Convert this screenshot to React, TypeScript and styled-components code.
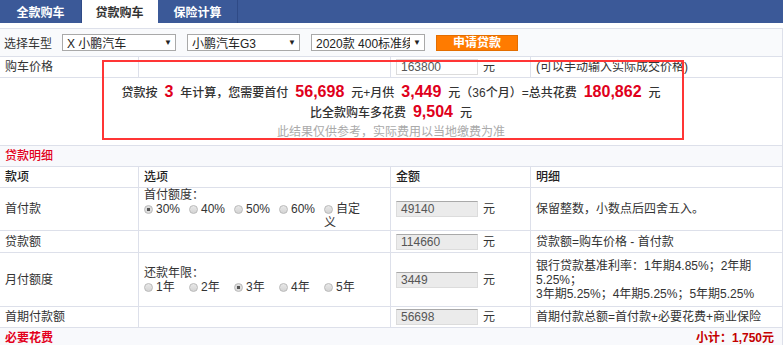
import React from 'react';
import styled, { createGlobalStyle } from 'styled-components';

const GlobalStyle = createGlobalStyle`
  * { box-sizing: border-box; }
  body {
    margin: 0;
    background: #fff;
    font-family: "Liberation Sans", "Noto Sans CJK SC", sans-serif;
    font-size: 12px;
    color: #333;
  }
`;

const Page = styled.div`
  position: relative;
  width: 783px;
`;

const TabBar = styled.div`
  display: flex;
  height: 23px;
  background: #3b5998;
`;

const Tab = styled.div<{ $active?: boolean; $w: number }>`
  width: ${(p) => p.$w}px;
  display: flex;
  align-items: center;
  justify-content: center;
  font-weight: 700;
  font-size: 12px;
  color: ${(p) => (p.$active ? '#333' : '#fff')};
  background: ${(p) => (p.$active ? '#fff' : '#3b5998')};
  border-right: 1px solid ${(p) => (p.$active ? '#fff' : '#2f4a86')};
`;

const ChooseRow = styled.div`
  margin-top: 5px;
  height: 28px;
  display: flex;
  align-items: center;
  padding-left: 4px;
  background: #f9fafc;
  border-top: 1px solid #dde0ea;
  border-right: 1px solid #dde0ea;
`;

const Label = styled.span`
  margin-right: 10px;
  font-size: 12px;
`;

const FakeSelect = styled.div<{ $w: number }>`
  position: relative;
  width: ${(p) => p.$w}px;
  height: 17px;
  margin-right: 11px;
  padding: 0 0 0 4px;
  border: 1px solid #a9a9a9;
  background: #fff;
  display: flex;
  align-items: center;
  font-size: 12px;
  color: #222;
`;

const SelectText = styled.span`
  flex: 1;
  white-space: nowrap;
  overflow: hidden;
`;

const Arrow = styled.span`
  flex: none;
  width: 14px;
  text-align: center;
  font-size: 8px;
  color: #222;
  background: #fff;
`;

const ApplyButton = styled.button`
  width: 82px;
  height: 16px;
  padding: 0;
  border: 1px solid #e36d00;
  background: #ff7b00;
  color: #fff;
  font-family: inherit;
  font-size: 12px;
  font-weight: 700;
  line-height: 14px;
`;

const Table = styled.table`
  width: 783px;
  border-collapse: separate;
  border-spacing: 0;
  table-layout: fixed;
  border-top: 1px solid #dde0ea;
`;

const Td = styled.td<{ $h?: number; $section?: boolean }>`
  height: ${(p) => (p.$h ? `${p.$h}px` : 'auto')};
  padding: 0 5px;
  border-bottom: 1px solid #dde0ea;
  border-right: 1px solid #dde0ea;
  background: ${(p) => (p.$section ? '#f8f9fc' : '#fff')};
  vertical-align: middle;
  line-height: 14px;
  font-size: 12px;
  color: #333;
`;

const Head = styled(Td)`
  color: #222;
  font-weight: 500;
`;

const SectionTitle = styled.span<{ $bold?: boolean }>`
  color: #e3001b;
  font-weight: ${(p) => (p.$bold ? 700 : 500)};
  font-size: 12px;
`;

const SectionLine = styled.div`
  display: flex;
  justify-content: space-between;
  align-items: center;
  padding-right: 3px;
`;

const Subtotal = styled.span`
  color: #c40000;
  font-weight: 700;
`;

const MoneyInput = styled.span<{ $editable?: boolean }>`
  display: inline-block;
  width: 82px;
  height: 16px;
  padding-left: 4px;
  line-height: 14px;
  background: ${(p) => (p.$editable ? '#fff' : '#ebebeb')};
  border: 1px solid #dcdcdc;
  border-top-color: ${(p) => (p.$editable ? '#dcdcdc' : '#a9a9a9')};
  color: #555;
  vertical-align: middle;
`;

const Unit = styled.span`
  margin-left: 5px;
  vertical-align: middle;
`;

const Options = styled.div`
  line-height: 14px;
`;

const Choice = styled.span`
  display: inline-block;
  width: 45px;
  vertical-align: top;
`;

const Radio = styled.span<{ $on?: boolean }>`
  display: inline-block;
  width: 9px;
  height: 9px;
  margin-right: 3px;
  border-radius: 50%;
  border: 1px solid #b9b9b9;
  background: ${(p) =>
    p.$on
      ? 'radial-gradient(circle, #555 0 1.6px, #ddd 2px)'
      : 'linear-gradient(#e8e8e8, #d4d4d4)'};
  vertical-align: -1px;
`;

const Result = styled.div`
  text-align: center;
  font-size: 12px;
  color: #333;
`;

const ResultLine = styled.div<{ $lh: number }>`
  line-height: ${(p) => p.$lh}px;
  font-weight: 500;
`;

const Big = styled.b`
  margin: 0 7px;
  color: #e0001b;
  font-size: 16px;
  font-weight: 700;
`;

const Note = styled.div`
  line-height: 20px;
  color: #aaa;
`;

const Annotation = styled.div`
  position: absolute;
  left: 102px;
  top: 60px;
  width: 582px;
  height: 80px;
  border: 2px solid #ff3535;
  pointer-events: none;
`;

type ChoiceProps = { items: string[]; selected: number };

const RadioGroup: React.FC<ChoiceProps> = ({ items, selected }) => (
  <Options>
    {items.map((item, i) => (
      <Choice key={item}>
        <Radio $on={i === selected} />
        {item}
      </Choice>
    ))}
  </Options>
);

const Amount: React.FC<{ value: string; editable?: boolean }> = ({ value, editable }) => (
  <>
    <MoneyInput $editable={editable}>{value}</MoneyInput>
    <Unit>元</Unit>
  </>
);

const Select: React.FC<{ w: number; text: string }> = ({ w, text }) => (
  <FakeSelect $w={w}>
    <SelectText>{text}</SelectText>
    <Arrow>▼</Arrow>
  </FakeSelect>
);

export default function App() {
  return (
    <Page>
      <GlobalStyle />
      <TabBar>
        <Tab $w={82}>全款购车</Tab>
        <Tab $w={76} $active>
          贷款购车
        </Tab>
        <Tab $w={80}>保险计算</Tab>
      </TabBar>

      <ChooseRow>
        <Label>选择车型</Label>
        <Select w={114} text="X 小鹏汽车" />
        <Select w={113} text="小鹏汽车G3" />
        <Select w={114} text="2020款 400标准续航版" />
        <ApplyButton type="button">申请贷款</ApplyButton>
      </ChooseRow>

      <Table>
        <colgroup>
          <col style={{ width: 139 }} />
          <col style={{ width: 252 }} />
          <col style={{ width: 140 }} />
          <col style={{ width: 252 }} />
        </colgroup>
        <tbody>
          <tr>
            <Td $h={21}>购车价格</Td>
            <Td />
            <Td>
              <Amount value="163800" editable />
            </Td>
            <Td>(可以手动输入实际成交价格)</Td>
          </tr>
          <tr>
            <Td $h={68} colSpan={4}>
              <Result>
                <ResultLine $lh={20}>
                  贷款按<Big>3</Big>年计算，您需要首付<Big>56,698</Big>元+月供<Big>3,449</Big>
                  元（36个月）=总共花费<Big>180,862</Big>元
                </ResultLine>
                <ResultLine $lh={18}>
                  比全款购车多花费<Big>9,504</Big>元
                </ResultLine>
                <Note>此结果仅供参考，实际费用以当地缴费为准</Note>
              </Result>
            </Td>
          </tr>
          <tr>
            <Td $h={21} colSpan={4} $section>
              <SectionTitle>贷款明细</SectionTitle>
            </Td>
          </tr>
          <tr>
            <Head $h={21}>款项</Head>
            <Head>选项</Head>
            <Head>金额</Head>
            <Head>明细</Head>
          </tr>
          <tr>
            <Td $h={43}>首付款</Td>
            <Td>
              首付额度：
              <RadioGroup items={['30%', '40%', '50%', '60%', '自定义']} selected={0} />
            </Td>
            <Td>
              <Amount value="49140" />
            </Td>
            <Td>保留整数，小数点后四舍五入。</Td>
          </tr>
          <tr>
            <Td $h={22}>贷款额</Td>
            <Td />
            <Td>
              <Amount value="114660" />
            </Td>
            <Td>贷款额=购车价格 - 首付款</Td>
          </tr>
          <tr>
            <Td $h={54}>月付额度</Td>
            <Td>
              还款年限：
              <RadioGroup items={['1年', '2年', '3年', '4年', '5年']} selected={2} />
            </Td>
            <Td>
              <Amount value="3449" />
            </Td>
            <Td>
              银行贷款基准利率：1年期4.85%；2年期
              <br />
              5.25%；
              <br />
              3年期5.25%；4年期5.25%；5年期5.25%
            </Td>
          </tr>
          <tr>
            <Td $h={21}>首期付款额</Td>
            <Td />
            <Td>
              <Amount value="56698" />
            </Td>
            <Td>首期付款总额=首付款+必要花费+商业保险</Td>
          </tr>
          <tr>
            <Td $h={21} colSpan={4} $section>
              <SectionLine>
                <SectionTitle $bold>必要花费</SectionTitle>
                <Subtotal>小计：1,750元</Subtotal>
              </SectionLine>
            </Td>
          </tr>
        </tbody>
      </Table>
      <Annotation />
    </Page>
  );
}
